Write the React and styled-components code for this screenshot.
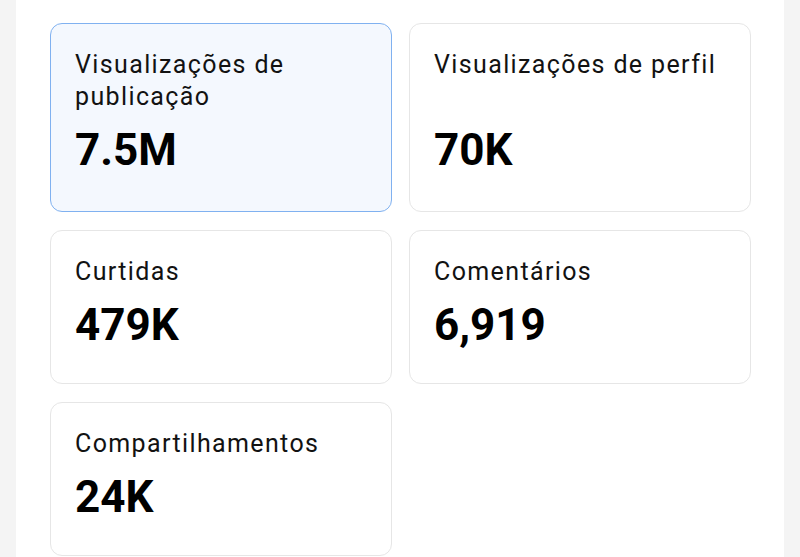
import React from 'react';
import styled, { createGlobalStyle } from 'styled-components';

const GlobalStyle = createGlobalStyle`
    html, body {
        margin: 0;
        padding: 0;
        background: #f4f4f4;
    }
    body {
        font-family: Roboto, "Noto Sans", Arial, sans-serif;
        color: #111111;
    }
`;

// White panel in the middle of the gray page
const Panel = styled.div`
    width: 768px;
    min-height: 557px;
    margin: 0 auto;
    background: #ffffff;
    padding: 23px 34px 0;
    box-sizing: border-box;
`;

const Grid = styled.div`
    display: grid;
    grid-template-columns: 342px 342px;
    column-gap: 17px;
    row-gap: 18px;
`;

const Card = styled.div`
    display: flex;
    flex-direction: column;
    box-sizing: border-box;
    padding: 25px 24px ${(props) => (props.top ? '36px' : '33px')};
    border-radius: 12px;
    border: 1px solid ${(props) => (props.active ? '#80b1f0' : '#e6e6e6')};
    background: ${(props) => (props.active ? '#f4f8fe' : '#ffffff')};
`;

const Label = styled.div`
    font-size: 25px;
    line-height: 32px;
    font-weight: 400;
    letter-spacing: 0.055em;
    color: #121212;
`;

const Value = styled.div`
    margin-top: auto;
    padding-top: 12px;
    font-size: 44px;
    line-height: 50px;
    font-weight: 700;
    color: #000000;
`;

const stats = [
    { label: 'Visualizações de publicação', value: '7.5M', active: true },
    { label: 'Visualizações de perfil', value: '70K' },
    { label: 'Curtidas', value: '479K' },
    { label: 'Comentários', value: '6,919' },
    { label: 'Compartilhamentos', value: '24K' },
];

const App = () => (
    <>
        <GlobalStyle />
        <Panel>
            <Grid>
                {stats.map((s, i) => (
                    <Card key={s.label} active={s.active} top={i < 2}>
                        <Label>{s.label}</Label>
                        <Value>{s.value}</Value>
                    </Card>
                ))}
            </Grid>
        </Panel>
    </>
);

export default App;
